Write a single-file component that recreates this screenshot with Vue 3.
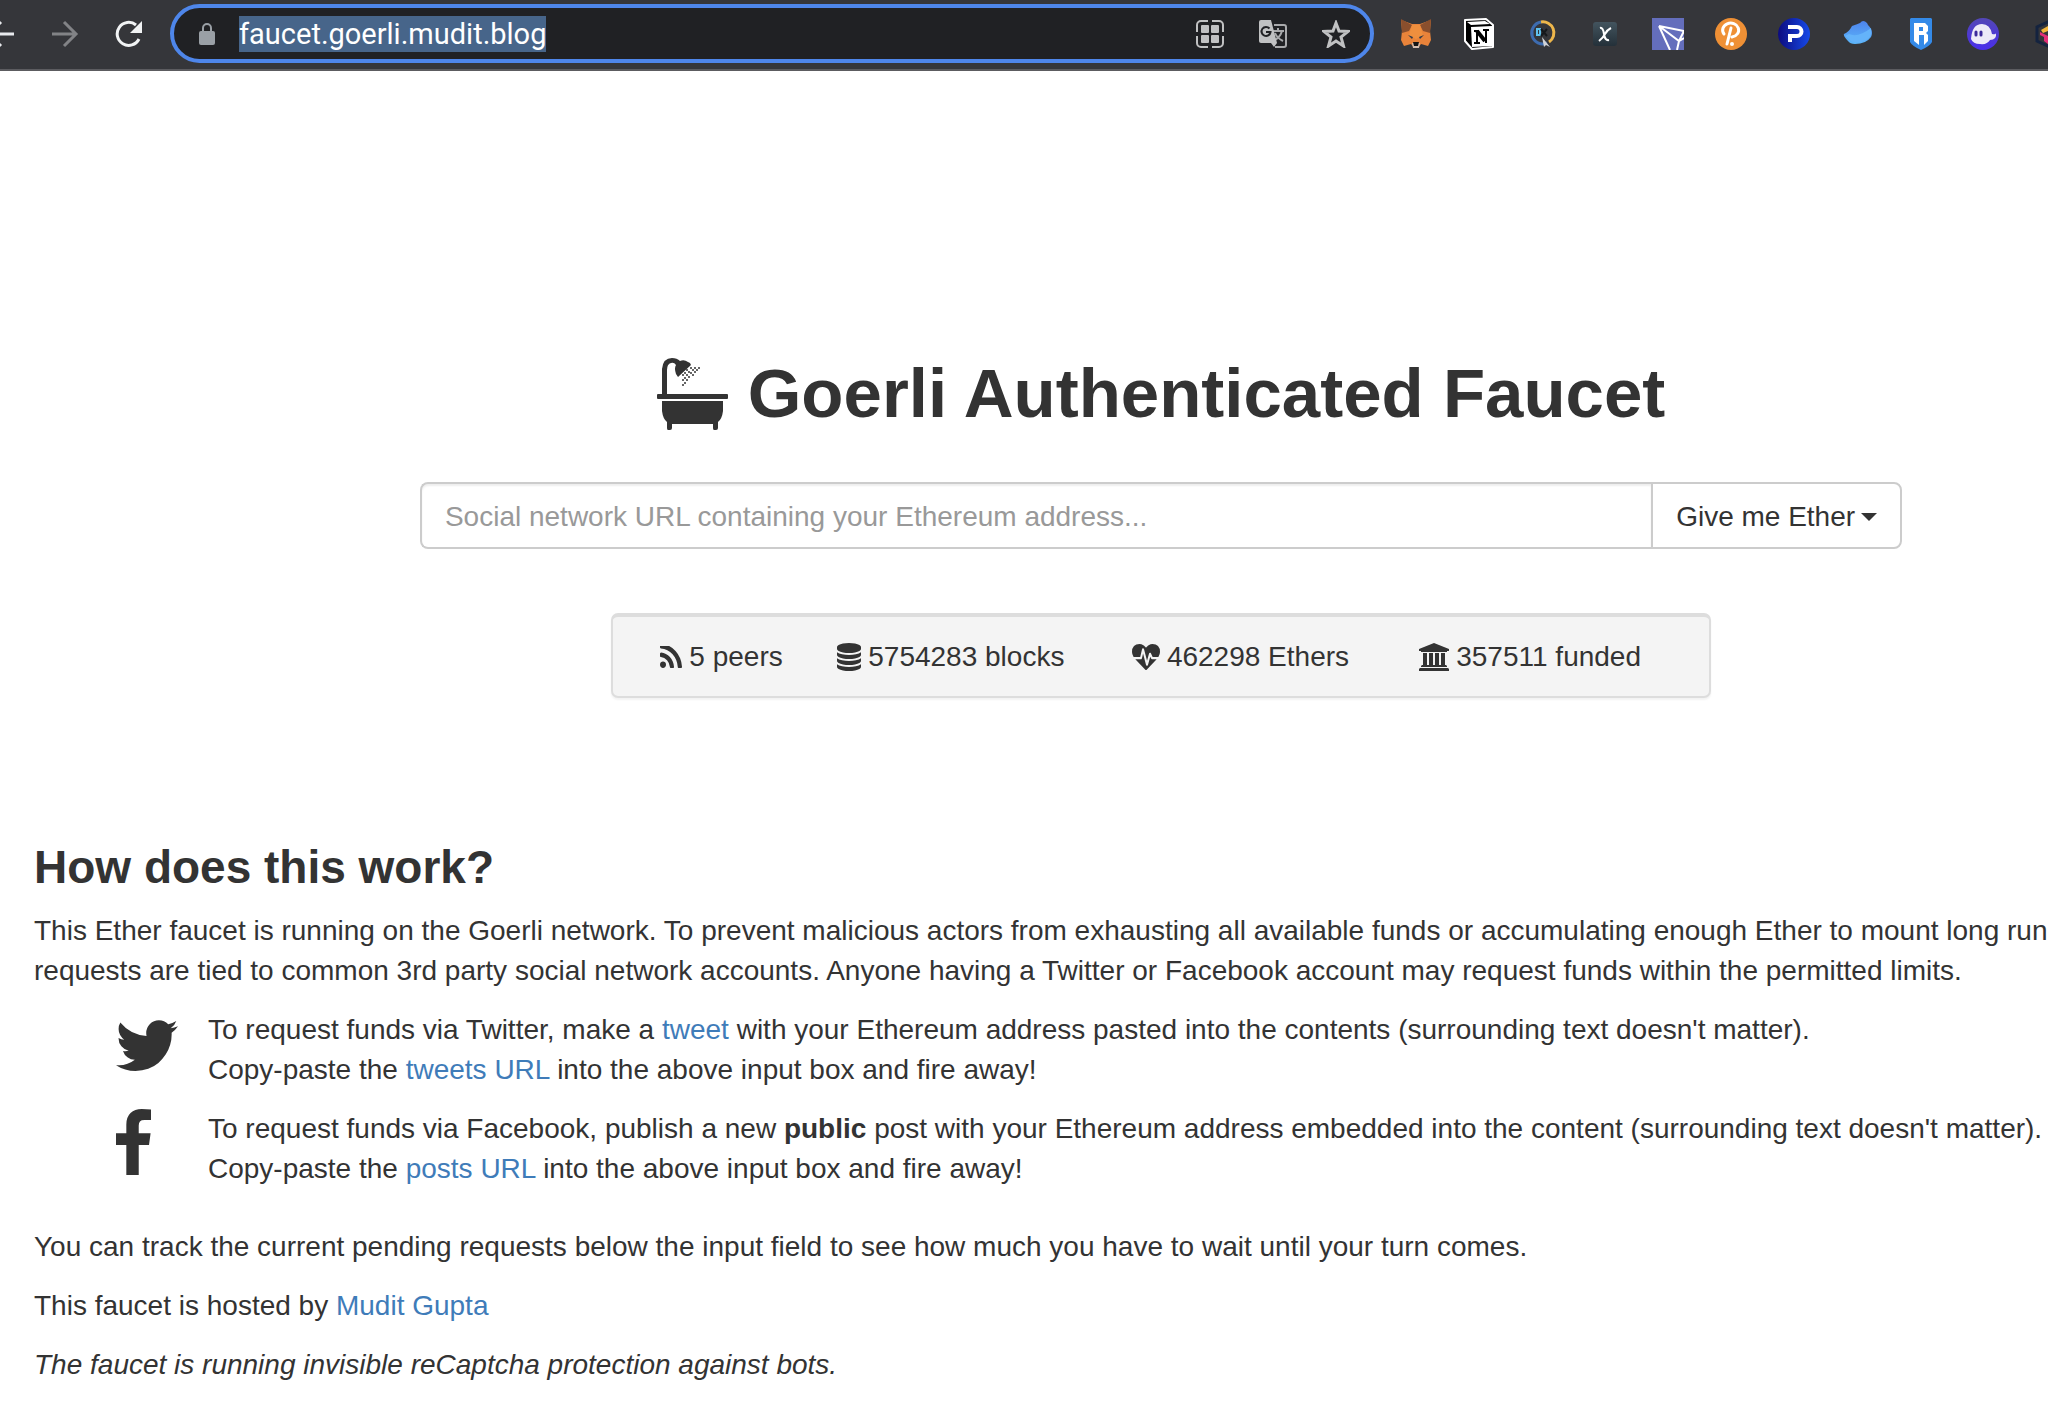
<script setup>
import { ref } from 'vue'

const address = ref('')
const host = 'faucet.goerli.mudit.blog'

const stats = [
  {
    text: '5 peers',
    w: 22,
    h: 22,
    box: '192 256 1408 1280',
    d: 'M576 1344q0 80-56 136t-136 56-136-56-56-136 56-136 136-56 136 56 56 136zm512 123q2 28-17 48-18 21-47 21h-135q-25 0-43-16.5t-20-41.5q-22-229-184.5-391.5t-391.5-184.5q-25-2-41.5-20t-16.5-43v-135q0-29 21-47 17-17 43-17h5q160 13 306 80.5t259 181.5q114 113 181.5 259t80.5 306zm512 2q2 27-18 47-18 20-46 20h-143q-26 0-44.5-17.5t-19.5-42.5q-12-215-101-408.5t-231.5-336-336-231.5-408.5-102q-25-1-42.5-19.5t-17.5-43.5v-143q0-28 20-46 18-18 44-18h3q262 13 501.5 120t425.5 294q187 186 294 425.5t120 501.5z'
  },
  {
    text: '5754283 blocks',
    w: 24,
    h: 28,
    box: '128 0 1536 1792',
    d: 'M896 768q237 0 443-43t325-127v170q0 69-103 128t-280 93.5-385 34.5-385-34.5-280-93.5-103-128v-170q119 84 325 127t443 43zm0 768q237 0 443-43t325-127v170q0 69-103 128t-280 93.5-385 34.5-385-34.5-280-93.5-103-128v-170q119 84 325 127t443 43zm0-384q237 0 443-43t325-127v170q0 69-103 128t-280 93.5-385 34.5-385-34.5-280-93.5-103-128v-170q119 84 325 127t443 43zm0-1152q208 0 385 34.5t280 93.5 103 128v128q0 69-103 128t-280 93.5-385 34.5-385-34.5-280-93.5-103-128v-128q0-69 103-128t280-93.5 385-34.5z'
  },
  {
    text: '462298 Ethers',
    w: 28,
    h: 26,
    box: '0 128 1792 1536',
    d: 'M1280 1024h305q-5 6-10 10.5t-9 7.5l-3 4-623 600q-18 18-44 18t-44-18l-624-602q-5-2-21-20h369q22 0 39.5-13.5t22.5-34.5l70-281 190 667q6 20 23 33t39 13q21 0 38-13t23-33l146-485 56 112q18 35 57 35zm512-428q0 145-103 300h-369l-111-221q-8-17-25.5-27t-36.5-8q-45 5-56 46l-129 430-196-686q-6-20-23.5-33t-39.5-13-39 13.5-22 34.5l-116 464h-423q-103-155-103-300 0-220 127-344t351-124q62 0 126.5 21.5t120 58 95.5 68.5 76 68q36-36 76-68t95.5-68.5 120-58 126.5-21.5q224 0 351 124t127 344z'
  },
  {
    text: '357511 funded',
    w: 30,
    h: 28,
    box: '0 0 30 28',
    d: 'M15 0L30 6V8H28V9H2V8H0V6ZM4 10H8V22H10V10H14V22H16V10H20V22H22V10H26V22H27L28 23V24H2V23L3 22H4ZM1 25H29L30 26V28H0V26Z'
  }
]

const drops = [
  [42, 10], [38, 10], [34, 10], [30, 12], [40, 12], [36, 12], [32, 14],
  [28, 15], [38, 14], [34, 15], [30, 17], [26, 17], [36, 17], [32, 19],
  [28, 20], [30, 22], [26, 22], [28, 25], [26, 27]
]
</script>

<template>
  <div class="window">
    <header class="toolbar">
      <nav class="history">
        <button class="tool" aria-label="Back">
          <svg width="28" height="28" viewBox="0 0 28 28" fill="none" stroke="#e8eaed" stroke-width="3"><path d="M27 14H3M14 2L2 14L14 26" /></svg>
        </button>
        <button class="tool" aria-label="Forward">
          <svg width="28" height="28" viewBox="0 0 28 28" fill="none" stroke="#828386" stroke-width="3"><path d="M1 14H25M13 2L25 14L13 26" /></svg>
        </button>
        <button class="tool" aria-label="Reload">
          <svg width="28" height="28" viewBox="0 0 28 28"><path d="M24 19A11.500 11.500 0 1 1 21 5" fill="none" stroke="#f1f3f4" stroke-width="3" /><path d="M27 1V13H15Z" fill="#f1f3f4" /></svg>
        </button>
      </nav>
      <div class="omnibox">
        <svg width="16" height="22" viewBox="0 0 16 22"><rect y="8" width="16" height="14" rx="2" fill="#9aa0a6" /><path d="M4 9V5a4 4 0 0 1 8 0V9" fill="none" stroke="#9aa0a6" stroke-width="2" /></svg>
        <span class="url"><span class="picked">{{ host }}</span></span>
        <div class="actions">
          <button class="tool" aria-label="Page apps">
            <svg width="28" height="28" viewBox="0 0 28 28"><path d="M12 1H5a4 4 0 0 0-4 4V12M16 1H23a4 4 0 0 1 4 4V12M1 16V23a4 4 0 0 0 4 4H12M27 16V23a4 4 0 0 1-4 4H16" fill="none" stroke="#c0c1c2" stroke-width="2" /><g fill="#c0c1c2"><rect x="5" y="5" width="8" height="8" rx="1" /><rect x="15" y="5" width="8" height="8" rx="1" /><rect x="5" y="15" width="8" height="8" rx="1" /><rect x="15" y="15" width="8" height="8" rx="1" /></g></svg>
          </button>
          <button class="tool" aria-label="Translate">
            <svg width="28" height="28" viewBox="0 0 28 28"><path d="M15 5H25a2 2 0 0 1 2 2V25a2 2 0 0 1-2 2H16" fill="none" stroke="#a8a9ab" stroke-width="2" /><path d="M14 11H25M19 8V11M23 11Q21 18 14 21M16 13Q18 18 24 21" fill="none" stroke="#a8a9ab" stroke-width="2" /><path d="M2 0H12L18 23H2a2 2 0 0 1-2-2V2a2 2 0 0 1 2-2Z" fill="#c0c1c2" /><path d="M12 23H18L15 27Z" fill="#c0c1c2" /><path d="M10.500 8.500A4.500 4.500 0 1 0 11.500 12H7" fill="none" stroke="#202124" stroke-width="2" /></svg>
          </button>
          <button class="tool" aria-label="Bookmark">
            <svg width="28" height="28" viewBox="0 0 28 28"><path d="M14 3L17 11L26 11.500L19 17L21.500 26L14 21L6.500 26L9 17L2 11.500L11 11Z" fill="none" stroke="#c0c1c2" stroke-width="3" /></svg>
          </button>
        </div>
      </div>
      <div class="extensions">
        <svg viewBox="0 0 32 32"><path d="M1 2L12 6H20L31 2L30 13L31 22L28 28L21 26L18 30H14L11 26L4 28L1 22L2 13Z" fill="#e8833a" /><path d="M1 1L12 7L9 13L2 15ZM31 1L20 7L23 13L30 15Z" fill="#8a4f2d" /><path d="M12 7H20L23 17L16 21L9 17Z" fill="#ee8f3e" /><path d="M8 17L13 19L12 21ZM24 17L19 19L20 21Z" fill="#2c3a4a" /><path d="M12 25H20L19 30H13Z" fill="#d5bfb2" /><path d="M13 24H19L18 28H14Z" fill="#161616" /></svg>
        <svg viewBox="0 0 32 32"><path d="M2 2L23 1L30 7V29L9 31L2 23V3Z" fill="#000" stroke="#fff" stroke-width="2" stroke-linejoin="round" /><path d="M8 9L29 8V28L9 29Z" fill="#fff" /><path d="M4 4L22 3L27 6L8 7Z" fill="#fff" /><path d="M14 13L22 23" fill="none" stroke="#000" stroke-width="4" /><path d="M11 13H16M20 12H26M14 13V24M11 25H17M23 12V25" fill="none" stroke="#000" stroke-width="2" /></svg>
        <svg viewBox="0 0 32 32"><path d="M15 4A11 11 0 1 0 21 25" fill="none" stroke="#3d6cb0" stroke-width="3" /><path d="M15 4A11 11 0 0 1 23 24" fill="none" stroke="#edb64b" stroke-width="3" /><path d="M11 11H14V17H11Z" fill="none" stroke="#5fc0ee" stroke-width="2" /><path d="M15 11L21 18M21 11L15 18" stroke="#15181c" stroke-width="2" /><path d="M16 19L24 29L20 27L18 29Z" fill="#d2d3d6" /></svg>
        <svg viewBox="0 0 32 32"><defs><linearGradient id="slate" x2="0" y2="1"><stop stop-color="#43545e" /><stop offset="1" stop-color="#243039" /></linearGradient></defs><rect x="4" y="4" width="24" height="24" rx="3" fill="url(#slate)" /><path d="M11 10Q14 9 15 16T20 22M22 10Q18 12 16 16T10 23" fill="none" stroke="#fff" stroke-width="2" /></svg>
        <svg viewBox="0 0 32 32"><path d="M0 0H32V32H0Z" fill="#646ebc" /><path d="M7 8L32 13M7 8L18 32M7 8L27 23L32 20M27 23L25 32M32 13L27 23" fill="none" stroke="#fff" stroke-width="2" /></svg>
        <svg viewBox="0 0 32 32"><circle cx="16" cy="16" r="16" fill="#ef9035" /><path d="M9 16A8 7 0 1 1 17 19M16 10L12 26" fill="none" stroke="#fff" stroke-width="3" stroke-linecap="round" /><circle cx="17" cy="26" r="2" fill="#fff" /></svg>
        <svg viewBox="0 0 32 32"><defs><linearGradient id="navy"><stop stop-color="#0c0b7f" /><stop offset="1" stop-color="#1649e8" /></linearGradient></defs><circle cx="16" cy="16" r="16" fill="url(#navy)" /><path d="M10 9H19a4 4 0 0 1 0 9H12V24" fill="none" stroke="#fff" stroke-width="4" /></svg>
        <svg viewBox="0 0 32 32"><defs><linearGradient id="sky" x2="0" y2="1"><stop stop-color="#4d83ec" /><stop offset="1" stop-color="#5cb7fa" /></linearGradient></defs><path d="M3 16Q8 14 11 8Q17 6 19 5Q22 1 26 5L27 7Q33 13 30 19Q25 26 14 26Q9 26 7 23Q2 18 3 16Z" fill="url(#sky)" /><path d="M8 16Q17 20 30 10Q31 17 28 20Q19 27 10 23Q8 21 4 18Z" fill="#64b3fa" /></svg>
        <svg viewBox="0 0 32 32"><path d="M7 0H27L28 1V24Q26 28 17 32Q8 28 6 24V1Z" fill="#348ae8" /><path d="M10 5H21L24 8V13L22 15L24 17V23L20 27V17H15V27L10 23ZM15 9V13H19V9Z" fill="#fff" fill-rule="evenodd" /></svg>
        <svg viewBox="0 0 32 32"><defs><linearGradient id="violet" x2="0" y2="1"><stop stop-color="#5347b6" /><stop offset="1" stop-color="#4a2eeb" /></linearGradient></defs><circle cx="16" cy="16" r="16" fill="url(#violet)" /><path d="M4 21Q5 6 15 6Q23 6 25 16Q29 17 29 15Q30 22 23 22Q20 27 13 26Q6 26 4 21Z" fill="#edeaf8" /><path d="M9 14V17M14 14V17" stroke="#3d2a9b" stroke-width="3" stroke-linecap="round" /></svg>
        <svg viewBox="0 0 32 32"><path d="M22 2L7 9V23L22 30" fill="none" stroke="#14233f" stroke-width="3" /><path d="M11 12L18 8V13L13 15Z" fill="#f3b63b" /><path d="M10 14L18 18V26L14 23V19L10 17Z" fill="#e22e79" /></svg>
      </div>
    </header>

    <main>
      <section class="hero">
        <h1>
          <svg width="71" height="72" viewBox="0 0 71 72" fill="#333">
            <path d="M5 36V11Q6 0 15 0Q20 0 23 3Q27 1 31 4L33 5L34 7L21 19L19 16Q17 10 19 7Q17 4 14 5Q10 6 10 12V36Z" />
            <rect y="36" width="71" height="5" rx="1" />
            <path d="M5 43H66V53Q65 61 61 64V70Q61 72 59 72H57Q56 72 56 70V66H15V70Q15 72 13 72H11Q10 72 10 70V64Q6 61 5 53Z" />
            <circle v-for="([x, y], i) in drops" :key="i" :cx="x" :cy="y" r="1" />
          </svg>
          <span>Goerli Authenticated Faucet</span>
        </h1>
        <form class="request" @submit.prevent>
          <input v-model="address" type="text" aria-label="Social network URL" placeholder="Social network URL containing your Ethereum address...">
          <button type="button">Give me Ether <i class="caret"></i></button>
        </form>
        <ul class="stats">
          <li v-for="s in stats" :key="s.text">
            <svg :width="s.w" :height="s.h" :viewBox="s.box" preserveAspectRatio="none"><path :d="s.d" fill="#333" /></svg>
            {{ s.text }}
          </li>
        </ul>
      </section>

      <section class="about">
        <h2>How does this work?</h2>
        <p>This Ether faucet is running on the Goerli network. To prevent malicious actors from exhausting all available funds or accumulating enough Ether to mount long running<br>requests are tied to common 3rd party social network accounts. Anyone having a Twitter or Facebook account may request funds within the permitted limits.</p>
        <dl>
          <dt><svg width="62" height="66" viewBox="108 0 1576 1664" preserveAspectRatio="none"><path fill="#333" d="M1684 408q-67 98-162 167 1 14 1 42 0 130-38 259.5t-115.5 248.5-184.5 210.5-258 146-323 54.5q-271 0-496-145 35 4 78 4 225 0 401-138-105-2-188-64.5t-114-159.5q33 5 61 5 43 0 85-11-112-23-185.5-111.5t-73.5-205.5v-4q68 38 146 41-66-44-105-115t-39-154q0-88 44-163 121 149 294.5 238.5t371.5 99.5q-8-38-8-74 0-134 94.500-228.500t228.500-94.500q140 0 236 102 109-21 205-78-37 115-142 178 93-10 186-50z" /></svg></dt>
          <dd>To request funds via Twitter, make a <a href="#tweet">tweet</a> with your Ethereum address pasted into the contents (surrounding text doesn't matter).<br>Copy-paste the <a href="#tweets">tweets URL</a> into the above input box and fire away!</dd>
          <dt><svg width="35" height="66" viewBox="479 0 864 1664" preserveAspectRatio="none"><path fill="#333" d="M1343 12v264h-157q-86 0-116 36t-30 108v189h293l-39 296h-254v759h-306v-759h-255v-296h255v-218q0-186 104-288.500t277-102.500q147 0 228 12z" /></svg></dt>
          <dd>To request funds via Facebook, publish a new <strong>public</strong> post with your Ethereum address embedded into the content (surrounding text doesn't matter).<br>Copy-paste the <a href="#posts">posts URL</a> into the above input box and fire away!</dd>
        </dl>
        <p>You can track the current pending requests below the input field to see how much you have to wait until your turn comes.</p>
        <p>This faucet is hosted by <a href="#host">Mudit Gupta</a></p>
        <p><em>The faucet is running invisible reCaptcha protection against bots.</em></p>
      </section>
    </main>
  </div>
</template>

<style>
body {
  background: #fff;
}
</style>

<style scoped>
* {
  box-sizing: border-box;
}
.window {
  overflow: hidden;
  color: #333;
  font: 28px/40px "Liberation Sans", Arial, sans-serif;
}
svg {
  display: block;
  flex: none;
}
.toolbar {
  display: flex;
  align-items: center;
  height: 71px;
  padding-bottom: 2px;
  background: #35363a;
  border-bottom: 2px solid #5c5c60;
}
.history {
  display: flex;
  flex: none;
  gap: 36px;
  margin-left: -13px;
  margin-right: 27px;
}
.tool {
  display: block;
  padding: 0;
  border: 0;
  background: none;
}
.omnibox {
  display: flex;
  flex: 1;
  align-items: center;
  height: 59px;
  padding: 0 20px 0 25px;
  border: 4px solid #4e86ea;
  border-radius: 30px;
  background: #202124;
}
.url {
  flex: 1;
  margin-left: 24px;
  color: #fff;
  font: 29px/36px Roboto, sans-serif;
}
.picked {
  display: inline-block;
  background: #47658a;
}
.actions {
  display: flex;
  gap: 35px;
}
.extensions {
  display: flex;
  flex: 0 0 648px;
  gap: 31px;
  margin-left: 26px;
  overflow: hidden;
}
.extensions svg {
  width: 32px;
  height: 32px;
}
.hero {
  display: flex;
  flex-direction: column;
  align-items: center;
  padding: 281px 0 0 274px;
}
h1 {
  display: flex;
  align-items: center;
  gap: 20px;
  margin: 0;
  font-size: 69px;
  line-height: 84px;
  white-space: nowrap;
}
.request {
  display: flex;
  width: calc(84% - 8px);
  height: 67px;
  margin-top: 46px;
}
.request input {
  flex: 1;
  min-width: 0;
  padding: 2px 23px 0;
  border: 2px solid #ccc;
  border-right: 0;
  border-radius: 8px 0 0 8px;
  background: #fff;
  box-shadow: inset 0 2px 2px rgba(0, 0, 0, 0.07);
  color: #555;
  font: inherit;
}
.request input::placeholder {
  color: #999;
  opacity: 1;
}
.request button {
  display: flex;
  align-items: center;
  gap: 6px;
  padding: 2px 23px 0;
  border: 2px solid #ccc;
  border-radius: 0 8px 8px 0;
  background: #fff;
  color: #333;
  font: inherit;
}
.caret {
  border: 8px solid transparent;
  border-top-color: #333;
  border-bottom: 0;
}
.stats {
  display: grid;
  grid-template-columns: 7fr 12fr 12fr 12fr;
  width: 62%;
  height: 85px;
  margin: 64px 0 0;
  padding: 0 34px 0 24px;
  border: 2px solid #ddd;
  border-top-width: 4px;
  border-radius: 7px;
  background: #f4f4f4;
  box-shadow: 0 2px 2px rgba(0, 0, 0, 0.05);
  list-style: none;
}
.stats li {
  display: flex;
  align-items: center;
  justify-content: center;
  gap: 7px;
  white-space: nowrap;
}
.about {
  padding: 143px 0 0 34px;
  white-space: nowrap;
}
h2 {
  margin: 0 0 18px;
  font-size: 46px;
  line-height: 52px;
}
p {
  margin: 0 0 19px;
}
dl {
  display: grid;
  grid-template-columns: 92px 1fr;
  grid-auto-rows: 80px;
  row-gap: 19px;
  margin: 0 0 38px;
  padding-left: 82px;
}
dd {
  margin: 0;
}
a {
  color: #3f7cb9;
  text-decoration: none;
}
</style>
